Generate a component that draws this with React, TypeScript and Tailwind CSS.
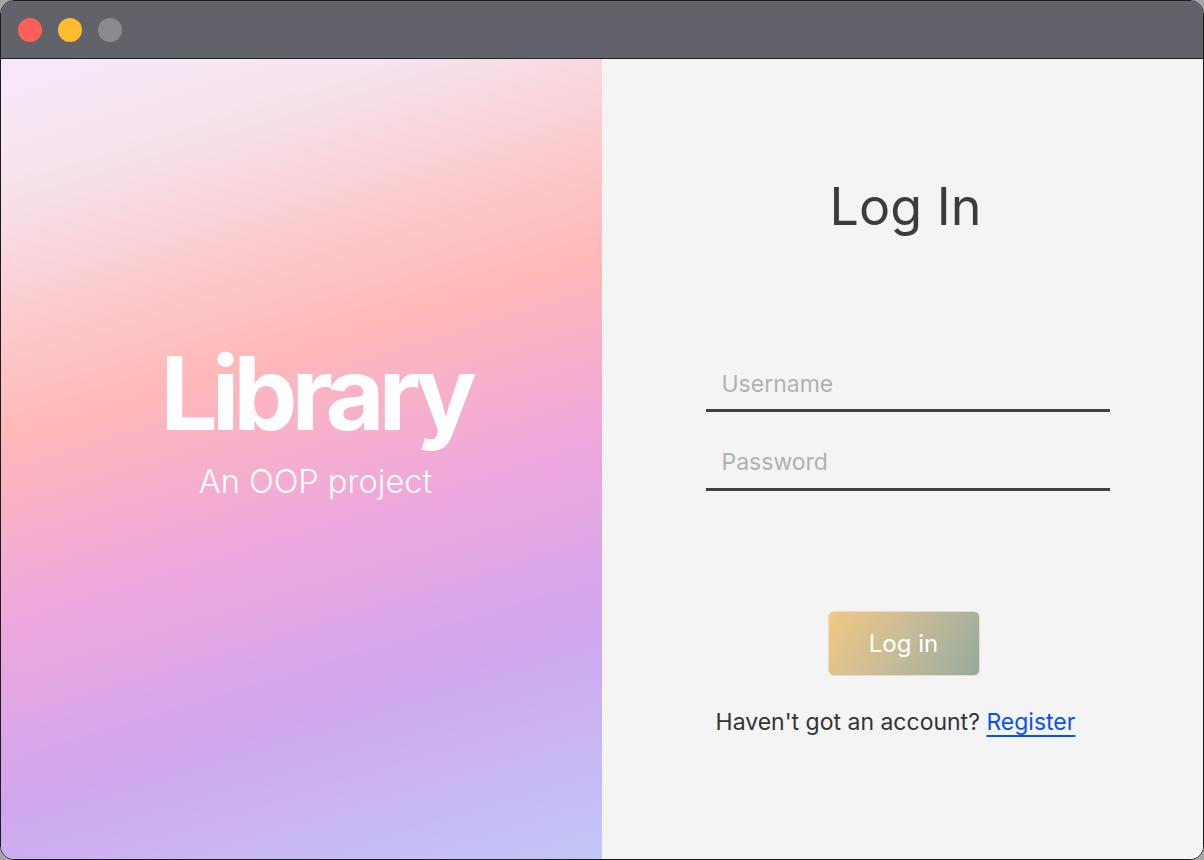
import React from "react";

export default function App() {
  return (
    <div className="w-[1204px] h-[860px] bg-[#a6a6a6] overflow-hidden" style={{ fontFamily: "Inter, 'Noto Sans', sans-serif" }}>
      <div className="w-[1204px] h-[860px] rounded-[14px] border border-[#1c1c1c] overflow-hidden flex flex-col bg-[#f4f4f4]">
        <div className="h-[57px] shrink-0 bg-[#62626a] border-b border-[#202020] flex items-center pl-[17px] gap-[16px] box-content">
          <div className="w-[24px] h-[24px] rounded-full bg-[#fe5f57]" />
          <div className="w-[24px] h-[24px] rounded-full bg-[#febc2e]" />
          <div className="w-[24px] h-[24px] rounded-full bg-[#8a8a91]" />
        </div>
        <div className="flex flex-1 min-h-0">
          <div
            className="w-[601px] shrink-0 flex flex-col items-center pt-[283px] pl-[28px]"
            style={{
              background:
                "linear-gradient(163deg, #f8e8fb 0%, #f6e4ee 12%, #ffb9b8 38%, #eea7de 58%, #d0a6ee 76%, #c2c8f8 100%)",
            }}
          >
            <div className="text-white font-bold text-[102px] leading-[102px] tracking-[-0.06em]">Library</div>
            <div className="text-white font-light text-[32.5px] leading-[32px] mt-[22px]">An OOP project</div>
          </div>
          <div className="flex-1 bg-[#f4f4f4] flex flex-col items-center pt-[122px]">
            <div className="text-[52px] leading-[52px] text-[#3c3c3c] ml-[6px]">Log In</div>
            <div className="w-[404px] ml-[10px] mt-[139px] border-b-[3px] border-[#3f3f3f] pb-[13px] pl-[16px] text-[23px] leading-[24px] text-[#b1b1b1]">
              Username
            </div>
            <div className="w-[404px] ml-[10px] mt-[38px] border-b-[3px] border-[#3f3f3f] pb-[14px] pl-[16px] text-[23px] leading-[24px] text-[#b1b1b1]">
              Password
            </div>
            <div
              className="mt-[120px] w-[152px] h-[65px] rounded-[6px] border border-[#e2ddd0] flex items-center justify-center text-white text-[24px] ml-[2px]"
              style={{ background: "linear-gradient(120deg, #f1c983 0%, #c6bb98 50%, #97aa9d 100%)" }}
            >
              Log in
            </div>
            <div className="mt-[34px] text-[23px] leading-[25px] text-[#333333] mr-[14px]">
              Haven't got an account? <span className="text-[#0b50f7] underline underline-offset-[5px]">Register</span>
            </div>
          </div>
        </div>
      </div>
    </div>
  );
}
